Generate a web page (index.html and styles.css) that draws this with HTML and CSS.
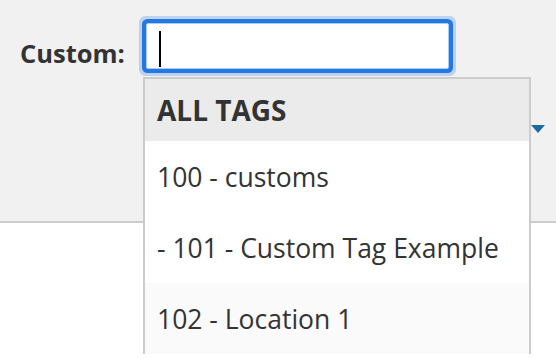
FILE: index.html
```html
<!DOCTYPE html>
<html lang="en">
  <head>
    <meta charset="UTF-8" />
    <meta name="viewport" content="width=device-width, initial-scale=1.0" />
    <title>Custom Tag Filter</title>
    <link rel="stylesheet" href="styles.css">
  </head>
  <body>
    <div class="toolbar">
      <div class="field">
        <label class="field-label">Custom:</label>
        <div class="search-box">
          <span class="caret"></span>
        </div>
      </div>

      <div class="select-row">
        <span class="select-arrow"></span>
      </div>

      <ul class="tag-menu">
        <li class="tag-header">ALL TAGS</li>
        <li class="tag-item">100 - customs</li>
        <li class="tag-item">- 101 - Custom Tag Example</li>
        <li class="tag-item shaded">102 - Location 1</li>
      </ul>
    </div>
  </body>
</html>
```

FILE: styles.css
```css
* {
  margin: 0;
  padding: 0;
  box-sizing: border-box;
}

body {
  font-family: "Open Sans", "Liberation Sans", sans-serif;
  background: #ffffff;
  color: #333;
  height: 358px;
  overflow: hidden;
}

.toolbar {
  position: relative;
  height: 223px;
  background: #f1f1f1;
  border-bottom: 2px solid #cccccc;
  padding: 23px 0 0 20px;
}

.field {
  display: flex;
  align-items: flex-start;
}

.field-label {
  font-size: 25.5px;
  font-weight: bold;
  line-height: 36px;
  color: #333;
  padding-top: 12px;
  width: 126px;
}

.search-box {
  width: 303px;
  height: 46px;
  background: #fff;
  border: 1px solid #a9cdf7;
  border-radius: 2px;
  box-shadow: 0 0 0 4px #2378e4, 0 0 0 7px rgba(35, 120, 228, 0.25);
  padding: 7px 0 0 12px;
}

.caret {
  display: block;
  width: 2px;
  height: 36px;
  background: #000;
}

.select-row {
  display: flex;
  justify-content: flex-end;
  padding: 54px 11px 0 0;
}

.select-arrow {
  width: 0;
  height: 0;
  border-left: 7px solid transparent;
  border-right: 7px solid transparent;
  border-top: 8px solid #1b6c9e;
}

.tag-menu {
  position: absolute;
  top: 77px;
  left: 143px;
  width: 388px;
  list-style: none;
  background: #fff;
  border: 2px solid #cccccc;
  border-bottom: none;
}

.tag-menu li {
  font-size: 26.5px;
  line-height: 36px;
  padding: 18px 12px 17px;
  color: #333;
  white-space: nowrap;
}

.tag-menu .tag-header {
  background: #ebebeb;
  font-size: 28px;
  font-weight: bold;
  padding: 13px 12px 13px;
}

.tag-menu .shaded {
  background: #fafafa;
}
```
